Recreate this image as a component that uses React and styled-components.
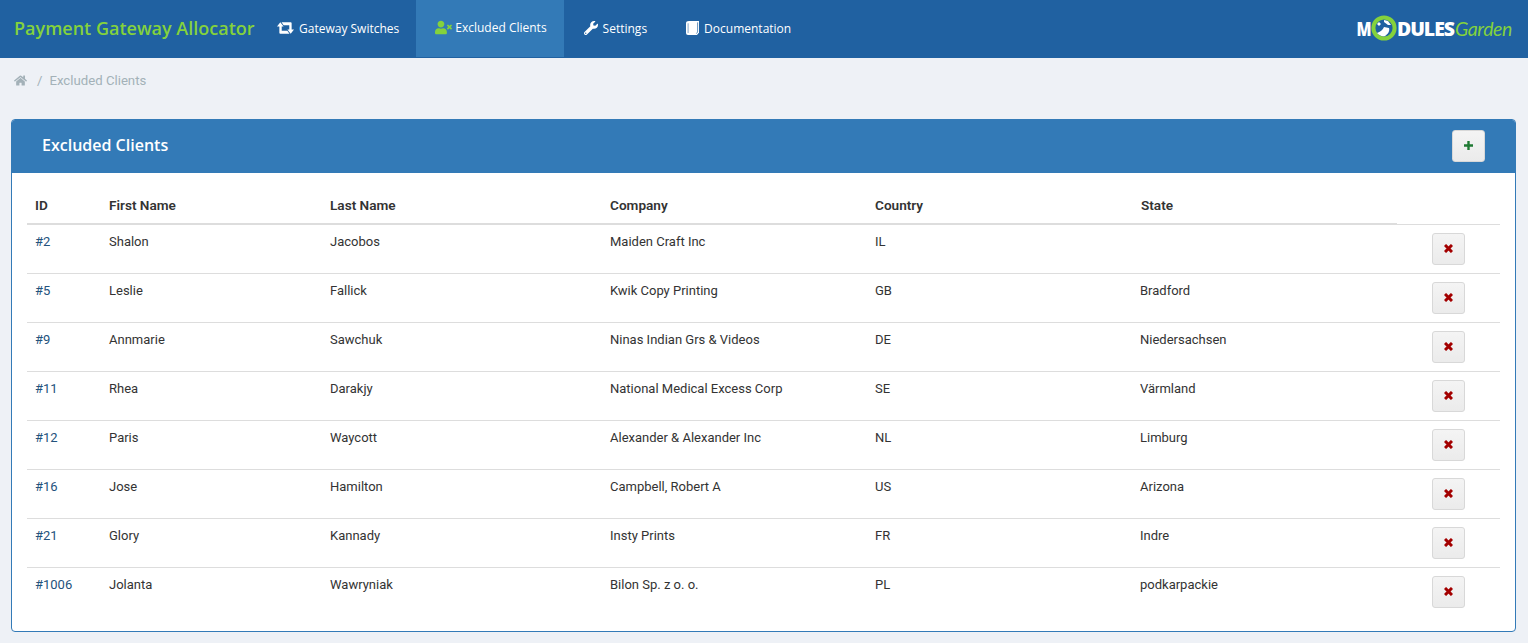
import React from 'react';
import styled, { createGlobalStyle } from 'styled-components';
import { FaUserTimes, FaWrench, FaHome } from 'react-icons/fa';

const Global = createGlobalStyle`
  html, body { margin: 0; padding: 0; background: #eef1f6; }
  body { font-family: Roboto, "Liberation Sans", sans-serif; }
  * { box-sizing: border-box; }
`;

const Page = styled.div`
  width: 1528px;
  height: 643px;
  overflow: hidden;
  background: #eef1f6;
`;
const TopBar = styled.header`
  height: 58px;
  background: #2061a1;
  display: flex;
  align-items: stretch;
`;
const Brand = styled.div`
  font: 600 18px "Open Sans", sans-serif;
  color: #84d23c;
  padding: 0 0 3px 14px;
  width: 261px;
  display: flex;
  align-items: center;
`;
const Nav = styled.nav`
  display: flex;
  height: 57px;
`;
const NavItem = styled.a`
  display: flex;
  align-items: center;
  gap: ${p => p.$gap || 6}px;
  padding: 0 17px ${p => (p.$active ? 3 : 1)}px ${p => p.$left || 16}px;
  font: 400 12px "Open Sans", sans-serif;
  color: #fff;
  background: ${p => (p.$active ? '#337ab7' : 'transparent')};
  svg { color: ${p => (p.$active ? '#84d23c' : '#fff')}; flex: none; }
`;
const Logo = styled.div`
  margin-left: auto;
  margin-right: 16px;
  padding-bottom: 2px;
  display: flex;
  align-items: center;
  color: #fff;
`;
const LogoBold = styled.span`
  font: 900 19.4px "Open Sans", "Liberation Sans", sans-serif;
  letter-spacing: -1px;
`;
const LogoInitial = styled(LogoBold)`
  display: inline-block;
  transform: scaleX(0.8);
  transform-origin: right center;
`;
const LogoThin = styled.span`
  font: italic 400 19.5px Lato, sans-serif;
  color: #84d23c;
  letter-spacing: -0.4px;
  margin-left: 1px;
`;
const Crumbs = styled.div`
  height: 61px;
  padding: 0 14px 16px;
  display: flex;
  align-items: center;
  font-size: 13.2px;
  color: #a3b1b8;
`;
const CrumbSeparator = styled.span`
  margin: 0 7px 0 10px;
`;
const Panel = styled.section`
  margin: 0 12px 0 11px;
  height: 513px;
  border: 1px solid #337ab7;
  border-radius: 4px;
  background: #fff;
  overflow: hidden;
`;
const PanelHead = styled.div`
  height: 53px;
  background: #337ab7;
  display: flex;
  align-items: center;
  justify-content: space-between;
  padding: 0 30px 2px 30px;
`;
const PanelTitle = styled.h2`
  margin: 0 0 2px;
  font: 600 16px "Open Sans", sans-serif;
  color: #fff;
`;
const IconButton = styled.button`
  width: 33px;
  height: 32px;
  padding: 0;
  border: 1px solid #d8d8d8;
  border-radius: 3px;
  background: linear-gradient(#f4f4f4, #ebebeb);
  display: flex;
  align-items: center;
  justify-content: center;
  color: ${p => p.$color};
`;
const TableWrap = styled.div`
  padding: 13px 15px 0;
`;
const Table = styled.table`
  width: 1473px;
  table-layout: fixed;
  border-collapse: collapse;
  font-size: 13px;
  color: #333;
`;
const HeadCell = styled.th`
  height: 38px;
  padding: 0 8px 0 ${p => p.$left || 8}px;
  text-align: left;
  font-weight: 600;
  font-size: 13.6px;
  color: #333;
  border-bottom: ${p => (p.$plain ? '0' : '2px solid #ddd')};
`;
const Row = styled.tr`
  border-top: 1px solid #ddd;
  height: 49px;
`;
const Cell = styled.td`
  padding: 8px;
  vertical-align: top;
  line-height: 17px;
`;
const IdCell = styled(Cell)`
  color: #23527c;
`;
const ActionCell = styled(Cell)`
  padding: 8px 0 0 35px;
`;

const rows = [
  ['#2', 'Shalon', 'Jacobos', 'Maiden Craft Inc', 'IL', ''],
  ['#5', 'Leslie', 'Fallick', 'Kwik Copy Printing', 'GB', 'Bradford'],
  ['#9', 'Annmarie', 'Sawchuk', 'Ninas Indian Grs & Videos', 'DE', 'Niedersachsen'],
  ['#11', 'Rhea', 'Darakjy', 'National Medical Excess Corp', 'SE', 'Värmland'],
  ['#12', 'Paris', 'Waycott', 'Alexander & Alexander Inc', 'NL', 'Limburg'],
  ['#16', 'Jose', 'Hamilton', 'Campbell, Robert A', 'US', 'Arizona'],
  ['#21', 'Glory', 'Kannady', 'Insty Prints', 'FR', 'Indre'],
  ['#1006', 'Jolanta', 'Wawryniak', 'Bilon Sp. z o. o.', 'PL', 'podkarpackie'],
];

const widths = [74, 221, 280, 265, 265, 265, 103];

function RetweetIcon() {
  return (
    <svg width="17" height="12" viewBox="0 0 18 12" fill="currentColor">
      <path d="M0 4.5L3.5 0 7 4.5H5V9h6l2.2 3H3.5q-1 0-1-1V4.5z" />
      <path d="M18 7.5L14.5 12 11 7.5h2V3H7L4.8 0h9.7q1 0 1 1v6.5z" />
    </svg>
  );
}

function BookIcon() {
  return (
    <svg width="13" height="14" viewBox="0 0 13 14" fill="currentColor">
      <path d="M3 0h10v11.6L11 14H2Q0 14 0 12V2.4Q0 0 3 0z" />
      <path d="M1.6 2.2H2.6V12H1.6z" fill="#2061a1" opacity="0.55" />
      <path d="M11.6 1.4v9.6L10.4 12.6" fill="none" stroke="#2061a1" strokeWidth="0.7" />
    </svg>
  );
}

function PlusIcon() {
  return (
    <svg width="9" height="9" viewBox="0 0 9 9" fill="none" stroke="currentColor" strokeWidth="2.4">
      <path d="M4.5 0v9M0 4.5h9" />
    </svg>
  );
}

function CloseIcon() {
  return (
    <svg width="9" height="9" viewBox="0 0 9 9" fill="none" stroke="currentColor" strokeWidth="3">
      <path d="M1 1l7 7M8 1L1 8" />
    </svg>
  );
}

function GlobeRing() {
  return (
    <svg width="26" height="26" viewBox="0 0 26 26">
      <circle cx="13" cy="13" r="10.6" fill="#2061a1" stroke="#84d23c" strokeWidth="4" />
      <path d="M6 18c3-1 6-3 7-6l5 1c1 3-1 6-4 8-3 1-6-1-8-3z" fill="#fff" />
      <path d="M13 5l4 1 3 4-3 0-4-3zM6 9l2-2 2 2-2 2z" fill="#fff" />
    </svg>
  );
}

export default function App() {
  return (
    <Page>
      <Global />
      <TopBar>
        <Brand>Payment Gateway Allocator</Brand>
        <Nav>
          <NavItem $gap={5}><RetweetIcon />Gateway Switches</NavItem>
          <NavItem $active $left={19} $gap={3}><FaUserTimes size={17} />Excluded Clients</NavItem>
          <NavItem $left={20} $gap={5}><FaWrench size={14} />Settings</NavItem>
          <NavItem $left={22} $gap={5}><BookIcon />Documentation</NavItem>
        </Nav>
        <Logo>
          <LogoInitial>M</LogoInitial>
          <GlobeRing />
          <LogoBold>DULES</LogoBold>
          <LogoThin>Garden</LogoThin>
        </Logo>
      </TopBar>
      <Crumbs>
        <FaHome size={13} />
        <CrumbSeparator>/</CrumbSeparator>
        <span>Excluded Clients</span>
      </Crumbs>
      <Panel>
        <PanelHead>
          <PanelTitle>Excluded Clients</PanelTitle>
          <IconButton $color="#1f7a33"><PlusIcon /></IconButton>
        </PanelHead>
        <TableWrap>
          <Table>
            <colgroup>
              {widths.map((w, i) => <col key={i} style={{ width: w }} />)}
            </colgroup>
            <thead>
              <tr>
                <HeadCell>ID</HeadCell>
                <HeadCell>First Name</HeadCell>
                <HeadCell>Last Name</HeadCell>
                <HeadCell>Company</HeadCell>
                <HeadCell>Country</HeadCell>
                <HeadCell $left={9}>State</HeadCell>
                <HeadCell $plain />
              </tr>
            </thead>
            <tbody>
              {rows.map(r => (
                <Row key={r[0]}>
                  <IdCell>{r[0]}</IdCell>
                  {r.slice(1).map((c, i) => <Cell key={i}>{c}</Cell>)}
                  <ActionCell>
                    <IconButton $color="#a30000"><CloseIcon /></IconButton>
                  </ActionCell>
                </Row>
              ))}
            </tbody>
          </Table>
        </TableWrap>
      </Panel>
    </Page>
  );
}
